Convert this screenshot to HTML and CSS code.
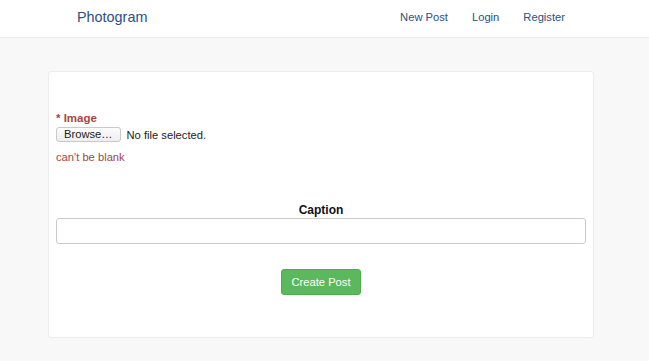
FILE: index.html
```html
<!DOCTYPE html>
<html lang="en">
<head>
    <meta charset="UTF-8">
    <meta name="viewport" content="width=device-width, initial-scale=1.0">
    <title>Photogram</title>
    <link rel="stylesheet" href="styles.css">
</head>
<body>
    <!-- Top navigation -->
    <nav class="navbar">
        <a class="brand" href="#">Photogram</a>
        <div class="nav-links">
            <a href="#">New Post</a>
            <a href="#">Login</a>
            <a href="#">Register</a>
        </div>
    </nav>

    <!-- New post form -->
    <div class="card">
        <form class="post-form">
            <div class="field has-error">
                <label class="required">* Image</label>
                <div class="file-row">
                    <span class="file-button">Browse…</span>
                    <span class="file-name">No file selected.</span>
                </div>
                <div class="help-block">can't be blank</div>
            </div>

            <div class="field caption-field">
                <label for="caption">Caption</label>
                <input type="text" id="caption" name="caption">
            </div>

            <div class="actions">
                <button type="submit" class="btn-success">Create Post</button>
            </div>
        </form>
    </div>
</body>
</html>
```

FILE: styles.css
```css
body {
    margin: 0;
    padding: 0;
    font-family: "Liberation Sans", Helvetica, Arial, sans-serif;
    font-size: 11.2px;
    color: #333;
    background: #f8f8f8;
}

a {
    text-decoration: none;
}

/* Navbar */
.navbar {
    height: 38px;
    background: #fff;
    border-bottom: 1px solid #ebebeb;
    display: flex;
    align-items: center;
    justify-content: space-between;
    padding: 0 84px 3px 77px;
    box-sizing: border-box;
}

.brand {
    color: #2b4f86;
    font-size: 14.4px;
}

.nav-links {
    display: flex;
    gap: 24px;
}

.nav-links a {
    color: #2b4f86;
    font-size: 11.2px;
}

/* Card */
.card {
    width: 546px;
    box-sizing: border-box;
    margin: 33px 0 0 48px;
    background: #fff;
    border: 1px solid #ececec;
    border-radius: 3px;
    padding: 38px 7px 42px 7px;
}

.field label {
    display: block;
    font-weight: bold;
    line-height: 16px;
}

.required {
    color: #a94442;
    font-size: 11.5px;
    margin-bottom: 1px;
}

.file-row {
    display: flex;
    align-items: center;
    gap: 6px;
    height: 15px;
}

.file-button {
    height: 15px;
    box-sizing: border-box;
    padding: 0 7px;
    line-height: 13px;
    color: #222;
    background: linear-gradient(#fcfcfc, #eeeeee);
    border: 1px solid #c9c9c9;
    border-radius: 3px;
}

.file-name {
    color: #222;
}

.help-block {
    color: #a94442;
    line-height: 16px;
    margin-top: 7px;
}

.caption-field {
    margin-top: 38px;
}

.caption-field label {
    text-align: center;
    font-size: 12px;
    line-height: 15px;
    color: #111;
}

.caption-field input {
    display: block;
    width: 100%;
    height: 26px;
    box-sizing: border-box;
    border: 1px solid #ccc;
    border-radius: 3px;
    background: #fff;
    margin: 0;
}

.actions {
    display: flex;
    justify-content: center;
    margin-top: 25px;
}

.btn-success {
    width: 80px;
    height: 26px;
    background: #5cb85c;
    border: 1px solid #4cae4c;
    border-radius: 3px;
    color: #fff;
    font-family: inherit;
    font-size: 11.2px;
    padding: 0;
    cursor: pointer;
}
```
